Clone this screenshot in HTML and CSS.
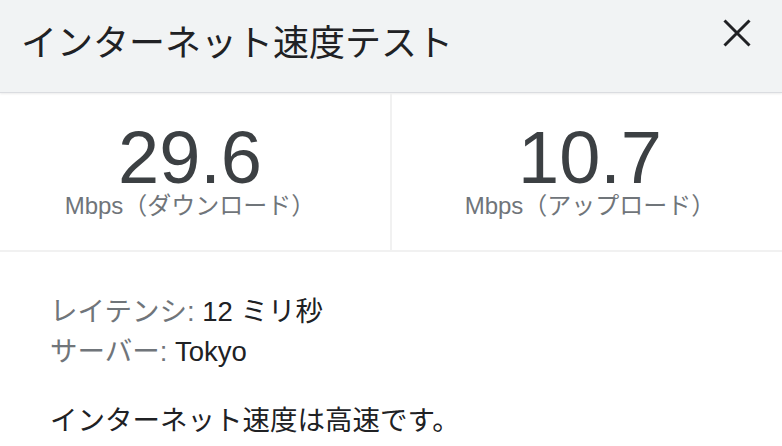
FILE: index.html
```html
<!DOCTYPE html>
<html lang="ja">
<head>
	<meta charset="UTF-8">
	<title>インターネット速度テスト</title>
	<link rel="stylesheet" href="styles.css">
</head>
<body>
	<div id="card">
		<div class="header">
			<div class="title">インターネット速度テスト</div>
			<svg class="close" width="28" height="28" viewBox="0 0 28 28">
				<path d="M1.5 1.5L26.5 26.5M26.5 1.5L1.5 26.5" stroke="#202124" stroke-width="3" fill="none"/>
			</svg>
		</div>
		<div class="speeds">
			<div class="speed down">
				<div class="num">29.6</div>
				<div class="unit">Mbps（ダウンロード）</div>
			</div>
			<div class="speed up">
				<div class="num">10.7</div>
				<div class="unit">Mbps（アップロード）</div>
			</div>
		</div>
		<div class="info">
			<div class="row"><span class="key">レイテンシ:</span> 12 ミリ秒</div>
			<div class="row"><span class="key">サーバー:</span> Tokyo</div>
			<div class="verdict">インターネット速度は高速です。</div>
		</div>
	</div>
</body>
</html>
```

FILE: styles.css
```css
body {
	margin: 0;
	background: #fff;
	font-family: "Liberation Sans", "Noto Sans CJK JP", sans-serif;
	color: #202124;
}
#card {
	width: 782px;
	height: 446px;
	overflow: hidden;
}
.header {
	height: 92px;
	display: flex;
	justify-content: space-between;
	align-items: flex-start;
	padding: 0 31px 0 21px;
	background: #f1f3f4;
	border-bottom: 1px solid #dadce0;
	box-shadow: 0 1px 2px rgba(0, 0, 0, 0.08);
}
.title {
	margin-top: 22px;
	font-size: 36px;
	line-height: 44px;
}
.close {
	margin-top: 19px;
}
.speeds {
	display: grid;
	grid-template-columns: 390px 1fr;
	border-bottom: 2px solid #f1f1f1;
}
.speed {
	padding: 31px 0 31px;
	text-align: center;
}
.down {
	padding-right: 10px;
}
.up {
	padding-left: 6px;
	border-left: 2px solid #f1f1f1;
}
.num {
	font-size: 74px;
	line-height: 68px;
	color: #3c4043;
}
.unit {
	font-size: 24px;
	line-height: 27px;
	color: #70757a;
}
.info {
	padding: 40px 0 0 50px;
	font-size: 27.5px;
}
.row {
	line-height: 40px;
}
.key {
	color: #70757a;
}
.verdict {
	margin-top: 29px;
	line-height: 40px;
}
```
